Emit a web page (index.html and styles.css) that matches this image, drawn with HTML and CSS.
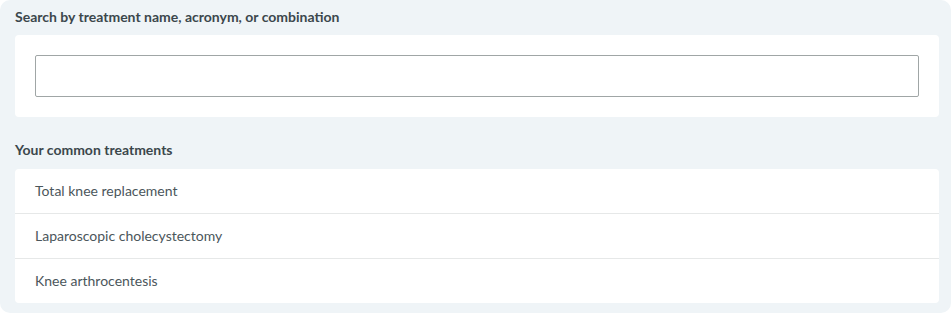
FILE: index.html
```html
<!DOCTYPE html>
<html>
<head>
<meta charset="utf-8">
<link rel="stylesheet" href="styles.css">
</head>
<body>
<div class="panel">
  <div class="section-title">Search by treatment name, acronym, or combination</div>
  <div class="card search-card">
    <input class="search-input" type="text">
  </div>
  <div class="section-title second">Your common treatments</div>
  <div class="card list-card">
    <div class="row">Total knee replacement</div>
    <div class="row">Laparoscopic cholecystectomy</div>
    <div class="row">Knee arthrocentesis</div>
  </div>
</div>
</body>
</html>
```
FILE: styles.css
```css
html, body {
  margin: 0;
  padding: 0;
  background: #ffffff;
}
body {
  font-family: Lato, "Liberation Sans", sans-serif;
}
.panel {
  width: 951px;
  height: 313px;
  box-sizing: border-box;
  background: #eff4f7;
  border-radius: 10px;
  padding: 8px 12px 10px 15px;
}
.section-title {
  font-size: 14px;
  font-weight: 700;
  color: #3b474c;
  line-height: 18px;
  height: 27px;
}
.section-title.second {
  margin-top: 24px;
  height: 28px;
}
.card {
  background: #ffffff;
  border-radius: 4px;
}
.search-card {
  padding: 20px;
}
.search-input {
  display: block;
  width: 100%;
  box-sizing: border-box;
  height: 42px;
  border: 1px solid #a0a6a6;
  border-radius: 2px;
  outline: none;
  background: #fff;
  margin: 0;
}
.row {
  height: 44px;
  line-height: 44px;
  padding-left: 20px;
  font-size: 14px;
  color: #4b565b;
  border-top: 1px solid #e6e8e8;
}
.row:first-child {
  border-top: none;
}
```
